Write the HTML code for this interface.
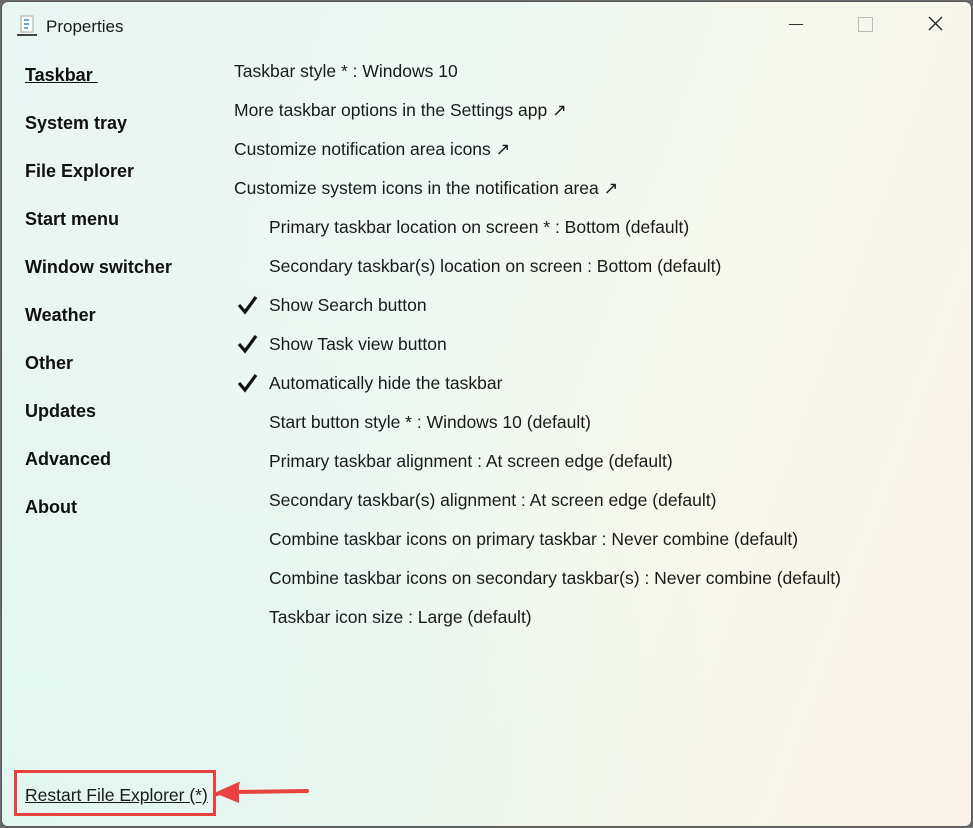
<!DOCTYPE html>
<html><head><style>
html,body{margin:0;padding:0}
body{width:973px;height:828px;position:relative;overflow:hidden;font-family:"Liberation Sans",sans-serif;background:#6a6a6a}
.win{position:absolute;left:1px;top:1px;width:969px;height:824px;border:1px solid #5a5a5a;border-radius:7px;
background:linear-gradient(110deg,#eaf6f3 0%,#eef8f3 40%,#f6f8ec 65%,#fbf3ea 100%);overflow:hidden}
.g{position:absolute;inset:0;background:radial-gradient(ellipse at 0% 100%,rgba(225,245,238,0.9),rgba(225,245,238,0) 55%)}
.t{position:absolute;font-size:17.5px;color:#1a1a1a;white-space:nowrap;line-height:20px}
.n{position:absolute;left:23px;font-size:18px;font-weight:bold;color:#111;line-height:20px}
.ck{position:absolute;left:235px}
</style></head><body>
<div class="win"><div class="g"></div>
<svg style="position:absolute;left:15px;top:13px" width="22" height="22" viewBox="0 0 22 22"><rect x="4" y="1" width="12" height="16" fill="#fff" stroke="#aaa"/><path d="M7 5h5M7 9h5M7 13h4" stroke="#3a8ad8" stroke-width="1.5"/><rect x="0" y="19" width="20" height="2" fill="#444"/></svg>
<div class="t" style="left:44px;top:15px;font-size:17px">Properties</div>
<div style="position:absolute;left:787px;top:22px;width:14px;height:1px;background:#333"></div>
<div style="position:absolute;left:856px;top:15px;width:13px;height:13px;border:1px solid #bbb"></div>
<svg style="position:absolute;left:926px;top:14px" width="15" height="15"><path d="M1 1L14 14M14 1L1 14" stroke="#222" stroke-width="1.3"/></svg>

<div class="n" style="top:63px;text-decoration:underline">Taskbar&nbsp;</div>
<div class="n" style="top:111px">System tray</div>
<div class="n" style="top:159px">File Explorer</div>
<div class="n" style="top:207px">Start menu</div>
<div class="n" style="top:255px">Window switcher</div>
<div class="n" style="top:303px">Weather</div>
<div class="n" style="top:351px">Other</div>
<div class="n" style="top:399px">Updates</div>
<div class="n" style="top:447px">Advanced</div>
<div class="n" style="top:495px">About</div>

<div class="t" style="left:232px;top:59px">Taskbar style * : Windows 10</div>
<div class="t" style="left:232px;top:98px">More taskbar options in the Settings app ↗</div>
<div class="t" style="left:232px;top:137px">Customize notification area icons ↗</div>
<div class="t" style="left:232px;top:176px">Customize system icons in the notification area ↗</div>
<div class="t" style="left:267px;top:215px">Primary taskbar location on screen * : Bottom (default)</div>
<div class="t" style="left:267px;top:254px">Secondary taskbar(s) location on screen : Bottom (default)</div>
<svg class="ck" style="top:293px" width="22" height="20"><path d="M2 10L8 17L19 2" stroke="#111" stroke-width="3.2" fill="none"/></svg><div class="t" style="left:267px;top:293px">Show Search button</div>
<svg class="ck" style="top:332px" width="22" height="20"><path d="M2 10L8 17L19 2" stroke="#111" stroke-width="3.2" fill="none"/></svg><div class="t" style="left:267px;top:332px">Show Task view button</div>
<svg class="ck" style="top:371px" width="22" height="20"><path d="M2 10L8 17L19 2" stroke="#111" stroke-width="3.2" fill="none"/></svg><div class="t" style="left:267px;top:371px">Automatically hide the taskbar</div>
<div class="t" style="left:267px;top:410px">Start button style * : Windows 10 (default)</div>
<div class="t" style="left:267px;top:449px">Primary taskbar alignment : At screen edge (default)</div>
<div class="t" style="left:267px;top:488px">Secondary taskbar(s) alignment : At screen edge (default)</div>
<div class="t" style="left:267px;top:527px">Combine taskbar icons on primary taskbar : Never combine (default)</div>
<div class="t" style="left:267px;top:566px">Combine taskbar icons on secondary taskbar(s) : Never combine (default)</div>
<div class="t" style="left:267px;top:605px">Taskbar icon size : Large (default)</div>

<div class="t" style="left:23px;top:783px;text-decoration:underline">Restart File Explorer (*)</div>
</div>
<div style="position:absolute;left:14px;top:770px;width:196px;height:40px;border:3px solid #e8413f"></div>
<svg style="position:absolute;left:215px;top:782px" width="95" height="24"><path d="M2 12L22 3L20 10L92 9" stroke="#e8413f" stroke-width="4" fill="none" stroke-linecap="round"/><path d="M2 12L24 3L24 21Z" fill="#e8413f"/></svg>
</body></html>
